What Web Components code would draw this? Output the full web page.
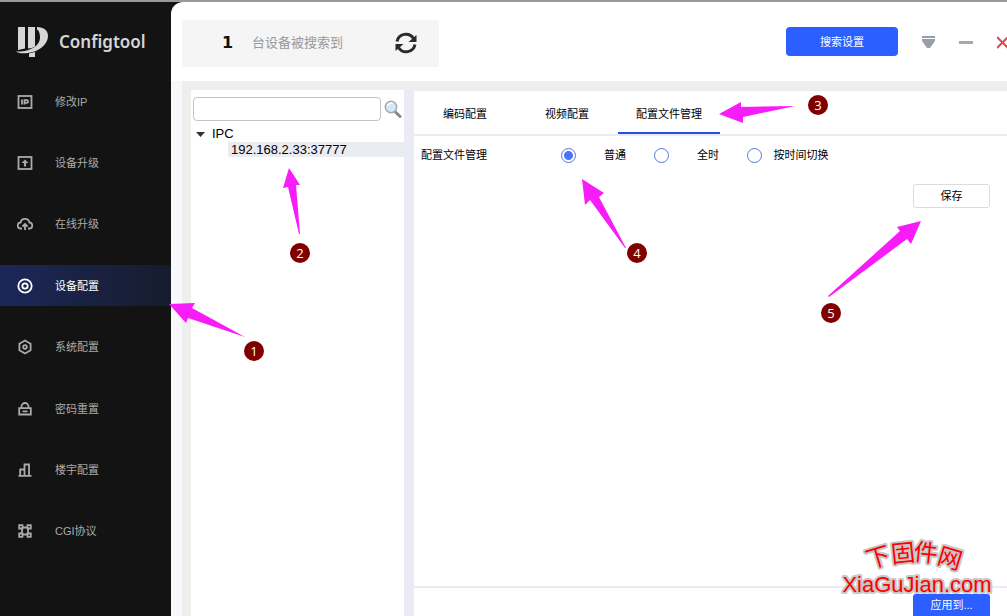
<!DOCTYPE html>
<html lang="zh-CN">
<head>
<meta charset="utf-8">
<title>Configtool</title>
<style>
    html { height: 100%; }
    body {
        margin: 0;
        min-height: 100%;
        position: relative;
        overflow: hidden;
        background: #131313;
        color: #000;
        font: 11px/16px "Liberation Sans", "Noto Sans CJK SC", sans-serif;
    }
</style>
</head>
<body>
<config-app>
    <side-nav slot="nav">
        <nav-item icon="ip">修改IP</nav-item>
        <nav-item icon="upgrade">设备升级</nav-item>
        <nav-item icon="cloud">在线升级</nav-item>
        <nav-item icon="target" active>设备配置</nav-item>
        <nav-item icon="hex">系统配置</nav-item>
        <nav-item icon="lock">密码重置</nav-item>
        <nav-item icon="building">楼宇配置</nav-item>
        <nav-item icon="cgi">CGI协议</nav-item>
    </side-nav>
    <top-bar slot="header" count="1">台设备被搜索到</top-bar>
    <device-tree slot="tree" group="IPC">192.168.2.33:37777</device-tree>
    <config-panel slot="panel"></config-panel>
</config-app>
<step-arrows></step-arrows>
<site-mark></site-mark>

<script>
const icons = {
    ip: `<rect x="1.500" y="2" width="13" height="12"/><path d="M5 5.500v5M7.500 10.500V6.200h2.300a1.300 1.300 0 0 1 0 2.600H8"/>`,
    upgrade: `<rect x="1.500" y="2" width="13" height="12"/><path d="M8 11.500V7" stroke-width="2.200"/><path d="M8 4.500l3.500 3.500h-7z" fill="currentColor" stroke="none"/>`,
    cloud: `<path d="M5 12.500H4a3 3 0 0 1-.500-6 4.600 4.600 0 0 1 9 0 3 3 0 0 1-.500 6h-1"/><path d="M8 14V8.500M5.500 10.500L8 8l2.500 2.500"/>`,
    target: `<circle cx="8" cy="8" r="6.700"/><circle cx="8" cy="8" r="2.700"/>`,
    hex: `<path d="M8 1.500l5.600 3.200v6.600L8 14.500l-5.600-3.200V4.700z"/><circle cx="8" cy="8" r="1.800"/>`,
    lock: `<path d="M2.200 7.200h11.600v6.300H2.200zM4.500 7V5.500a3.500 3.500 0 0 1 7 0V7M5.500 10.300h5"/>`,
    building: `<path d="M1.500 13.800h13M3.200 14V7.500h3.600M7.500 14V2.500h4.500V14"/>`,
    cgi: `<path d="M2.200 2.200h3.300v3.300H2.200zM10.500 2.200h3.300v3.300h-3.300zM2.200 10.500h3.300v3.300H2.200zM10.500 10.500h3.300v3.300h-3.300zM6 4.500h4M6 11.500h4M5 6v4M11 6v4"/>`
};

class ConfigApp extends HTMLElement {
    constructor() {
        super();
        this.attachShadow({ mode: "open" }).innerHTML = `
            <style>
                :host {
                    display: grid;
                    grid-template-columns: 171px 1fr;
                    box-sizing: border-box;
                    min-height: 100vh;
                    border-top: 2px solid #999;
                }
                .main {
                    display: flex;
                    flex-direction: column;
                    min-width: 0;
                    background: #fff;
                    border-top-left-radius: 12px;
                }
                .body {
                    flex: 1;
                    display: flex;
                    background: #ebebf5;
                    border-left: 11px solid #f8f8fc;
                }
                .tree {
                    display: flex;
                    width: 213px;
                    border-left: 9px solid #eee;
                    border-top: 9px solid #eee;
                }
                .panel {
                    flex: 1;
                    display: flex;
                    border-top: 9px solid #eee;
                    padding: 1px 0 0 10px;
                }
                ::slotted(*) { flex: 1; }
                ::slotted([slot=header]) { flex: none; }
            </style>
            <slot name="nav"></slot>
            <div class="main">
                <slot name="header"></slot>
                <div class="body">
                    <div class="tree"><slot name="tree"></slot></div>
                    <div class="panel"><slot name="panel"></slot></div>
                </div>
            </div>
        `;
    }
}

class SideNav extends HTMLElement {
    constructor() {
        super();
        this.attachShadow({ mode: "open" }).innerHTML = `
            <style>
                :host {
                    display: flex;
                    flex-direction: column;
                    background: #131313;
                    color: #d6d6d6;
                }
                .brand {
                    display: flex;
                    align-items: center;
                    gap: 11px;
                    height: 79px;
                    padding-left: 16px;
                    font: 600 17px/24px "Noto Sans", sans-serif;
                }
                nav {
                    flex: 1;
                    display: flex;
                    flex-direction: column;
                    justify-content: space-between;
                    padding-bottom: 64px;
                }
            </style>
            <div class="brand">
                <svg width="32" height="30" viewBox="0 0 32 30" fill="currentColor">
                    <path d="M2 0h7v21.500l-7 1.500zM12 0h7v19.500l-3 1.500-4 .500z"/>
                    <path d="M21 0c7 0 11 3.500 11 9 0 9-10 16-20 17-6 .600-10 .200-12-1.500 12 1 24-5 24-14 0-4-1-7-3-8z"/>
                    <path d="M13 26.500l6-1.500v5h-6z"/>
                </svg>
                <span>Configtool</span>
            </div>
            <nav><slot></slot></nav>
        `;
    }
}

class NavItem extends HTMLElement {
    connectedCallback() {
        this.attachShadow({ mode: "open" }).innerHTML = `
            <style>
                :host { display: block; }
                a {
                    display: flex;
                    align-items: center;
                    gap: 22px;
                    height: 41px;
                    padding-left: 17px;
                    color: #aaa;
                    text-decoration: none;
                }
                svg {
                    fill: none;
                    stroke: currentColor;
                    stroke-width: 1.8;
                }
                :host([active]) a {
                    color: #fff;
                    background: linear-gradient(90deg, #1c2759, #171c2c);
                }
            </style>
            <a href="#">
                <svg width="16" height="16" viewBox="0 0 16 16">${icons[this.getAttribute("icon")]}</svg>
                <span><slot></slot></span>
            </a>
        `;
    }
}

class TopBar extends HTMLElement {
    connectedCallback() {
        this.attachShadow({ mode: "open" }).innerHTML = `
            <style>
                :host {
                    display: flex;
                    align-items: center;
                    justify-content: space-between;
                    height: 79px;
                    padding-left: 11px;
                }
                .found {
                    display: flex;
                    align-items: center;
                    box-sizing: border-box;
                    width: 257px;
                    height: 47px;
                    margin-top: 4px;
                    padding: 0 21px 2px 40px;
                    background: #f5f5f5;
                    color: #999;
                    font-size: 13px;
                }
                .found b {
                    width: 30px;
                    color: #111;
                    font: bold 16px/20px "DejaVu Sans", sans-serif;
                }
                .found button { margin-left: auto; }
                button {
                    display: flex;
                    padding: 0;
                    border: 0;
                    background: none;
                }
                .actions {
                    display: flex;
                    align-items: center;
                    gap: 24px;
                }
                .actions .primary {
                    justify-content: center;
                    align-items: center;
                    width: 112px;
                    height: 29px;
                    border-radius: 4px;
                    background: #2b5fff;
                    color: #fff;
                    font: inherit;
                }
            </style>
            <div class="found">
                <b>${this.getAttribute("count")}</b>
                <slot></slot>
                <button aria-label="刷新">
                    <svg width="24" height="24" viewBox="0 0 24 24" fill="none" stroke="#2b2b2b" stroke-width="3">
                        <path d="M3 10.500a9 9 0 0 1 16.500-3M21 13.500a9 9 0 0 1-16.500 3"/>
                        <path d="M22.500 4v7h-8zM1.500 20v-7h8z" fill="#2b2b2b" stroke="none"/>
                    </svg>
                </button>
            </div>
            <div class="actions">
                <button class="primary">搜索设置</button>
                <button aria-label="菜单">
                    <svg width="13" height="14" viewBox="0 0 13 14" fill="#989eaa"><path d="M0 1h13v2H0zM0 4h13v2l-5 7H5L0 6z"/></svg>
                </button>
                <button aria-label="最小化">
                    <svg width="14" height="14" viewBox="0 0 14 14" fill="#a3a8b3"><path d="M0 6h14v3H0z"/></svg>
                </button>
                <button aria-label="关闭">
                    <svg width="10" height="14" viewBox="0 0 10 14" stroke="#e0494d" stroke-width="2"><path d="M0 2l11 11M0 13L11 2"/></svg>
                </button>
            </div>
        `;
    }
}

class DeviceTree extends HTMLElement {
    connectedCallback() {
        this.attachShadow({ mode: "open" }).innerHTML = `
            <style>
                :host {
                    display: block;
                    min-width: 0;
                    background: #fff;
                    font-size: 13px;
                }
                .search {
                    display: flex;
                    gap: 3px;
                    padding: 7px 2px 5px;
                }
                input {
                    flex: 1;
                    min-width: 0;
                    height: 24px;
                    box-sizing: border-box;
                    border: 1px solid #c4c4c4;
                    border-radius: 4px;
                    background: #fff;
                    font: inherit;
                }
                button {
                    padding: 0;
                    border: 0;
                    background: none;
                }
                svg { display: block; }
                ul {
                    margin: 0;
                    padding: 0;
                    list-style: none;
                }
                .group {
                    display: flex;
                    align-items: center;
                    gap: 7px;
                    padding-left: 5px;
                }
                .leaf {
                    margin-left: 37px;
                    padding-left: 3px;
                    line-height: 15px;
                    background: #ebebf2;
                }
            </style>
            <div class="search">
                <input type="text" aria-label="搜索设备">
                <button aria-label="搜索">
                    <svg width="18" height="20" viewBox="1 0 18 20">
                        <path d="M12 12.500l5 5" stroke="#888" stroke-width="3" stroke-linecap="round"/>
                        <circle cx="8" cy="8" r="5.700" fill="#d3e8f7" stroke="#a3a9ae" stroke-width="1.500"/>
                        <path d="M4.500 7a4 4 0 0 1 5-2.500" fill="none" stroke="#fff" stroke-width="1.500"/>
                    </svg>
                </button>
            </div>
            <ul>
                <li>
                    <div class="group">
                        <svg width="9" height="5" viewBox="0 0 9 5"><path d="M0 0h9L4.500 5z" fill="#333"/></svg>
                        ${this.getAttribute("group")}
                    </div>
                    <ul><li class="leaf"><slot></slot></li></ul>
                </li>
            </ul>
        `;
    }
}

class ConfigPanel extends HTMLElement {
    constructor() {
        super();
        this.attachShadow({ mode: "open" }).innerHTML = `
            <style>
                :host {
                    display: flex;
                    flex-direction: column;
                    background: #fff;
                }
                button { font: inherit; }
                .tabs {
                    display: flex;
                    border-bottom: 2px solid #ebebf2;
                }
                .tabs button {
                    width: 102px;
                    height: 43px;
                    padding: 4px 0 0;
                    border: 0;
                    border-bottom: 2px solid transparent;
                    background: none;
                    color: #000;
                }
                .tabs [aria-selected=true] { border-color: #1f4fe8; }
                fieldset {
                    display: flex;
                    align-items: center;
                    margin: 0;
                    padding: 11px 0 0 7px;
                    border: 0;
                }
                .name { width: 140px; }
                label {
                    display: flex;
                    align-items: center;
                    width: 93px;
                }
                label span {
                    flex: 1;
                    text-align: center;
                }
                input {
                    appearance: none;
                    width: 15px;
                    height: 15px;
                    margin: 0;
                    border: 1px solid #5278dd;
                    border-radius: 50%;
                    background: #fff;
                }
                input:checked { background: radial-gradient(#4a73ff 4px, #fff 5px); }
                .row {
                    display: flex;
                    justify-content: flex-end;
                    padding: 21px 17px 0;
                }
                .row button, footer button {
                    width: 77px;
                    height: 24px;
                    border: 1px solid #dcdcdc;
                    border-radius: 3px;
                    background: #fff;
                    color: #000;
                }
                footer {
                    display: flex;
                    justify-content: flex-end;
                    margin-top: auto;
                    padding: 6px 17px 0;
                    border-top: 2px solid #ebebf2;
                }
                footer button {
                    height: 22px;
                    border: 0;
                    border-radius: 3px 3px 0 0;
                    background: #2b5fff;
                    color: #fff;
                }
            </style>
            <div class="tabs" role="tablist">
                <button role="tab" aria-selected="false">编码配置</button>
                <button role="tab" aria-selected="false">视频配置</button>
                <button role="tab" aria-selected="true">配置文件管理</button>
            </div>
            <fieldset aria-labelledby="mode">
                <span class="name" id="mode">配置文件管理</span>
                <label><input type="radio" name="mode" checked><span>普通</span></label>
                <label><input type="radio" name="mode"><span>全时</span></label>
                <label><input type="radio" name="mode"><span>按时间切换</span></label>
            </fieldset>
            <div class="row"><button>保存</button></div>
            <footer><button>应用到...</button></footer>
        `;
    }
}

// numbered steps drawn over the window
class StepArrows extends HTMLElement {
    constructor() {
        super();
        const steps = [
            [254, 351, "169,304 195,303 192,308 245,337 188,318 186,323"],
            [300, 253, "289,168 300,185 296,185 300,234 299,234 288,187 283,188"],
            [818, 105, "719,114 741,102 741,107 795,106 743,117 743,123"],
            [637, 253, "582,179 604,193 599,197 626,248 625,248 590,200 585,205"],
            [831, 313, "921,221 911,244 907,239 829,297 828,296 900,231 897,227"]
        ];
        this.attachShadow({ mode: "open" }).innerHTML = `
            <style>
                :host {
                    position: absolute;
                    top: 0;
                    left: 0;
                    pointer-events: none;
                }
                svg { display: block; }
                polygon { fill: #f81df8; }
                circle { fill: #800000; }
                text {
                    fill: #fff;
                    font: 13px "Open Sans", sans-serif;
                    text-anchor: middle;
                }
            </style>
            <svg width="1007" height="400">
                ${steps.map(([x, y, points], i) => `
                    <polygon points="${points}"/>
                    <circle cx="${x}" cy="${y}" r="10"/>
                    <text x="${x}" y="${y + 5}">${i + 1}</text>
                `).join("")}
            </svg>
        `;
    }
}

class SiteMark extends HTMLElement {
    constructor() {
        super();
        this.attachShadow({ mode: "open" }).innerHTML = `
            <style>
                :host {
                    position: absolute;
                    right: 12px;
                    bottom: 16px;
                    pointer-events: none;
                }
                svg { display: block; }
                text {
                    fill: #f00;
                    stroke: #c8c8c8;
                    stroke-width: 4;
                    stroke-linejoin: round;
                    paint-order: stroke;
                    font: 22px "Liberation Sans", sans-serif;
                }
                .cn { font: 24px "Noto Sans CJK SC", sans-serif; }
            </style>
            <svg width="156" height="64" viewBox="0 0 156 64">
                <text class="cn" x="30 53 74 97" y="33 27 24 27" rotate="-17 -6 6 17">下固件网</text>
                <text x="78" y="56" text-anchor="middle">XiaGuJian.com</text>
            </svg>
        `;
    }
}

customElements.define("config-app", ConfigApp);
customElements.define("side-nav", SideNav);
customElements.define("nav-item", NavItem);
customElements.define("top-bar", TopBar);
customElements.define("device-tree", DeviceTree);
customElements.define("config-panel", ConfigPanel);
customElements.define("step-arrows", StepArrows);
customElements.define("site-mark", SiteMark);
</script>
</body>
</html>
